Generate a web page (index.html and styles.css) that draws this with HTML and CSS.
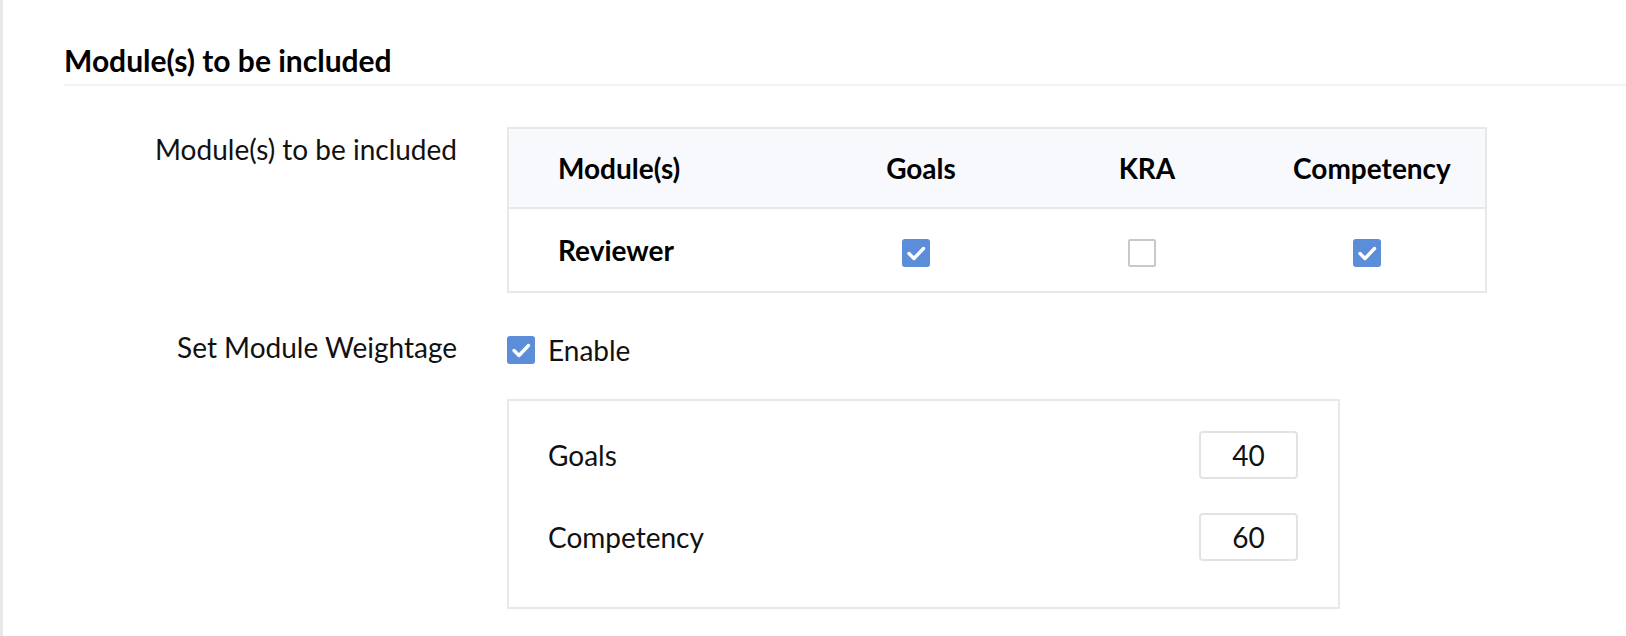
FILE: index.html
```html
<!DOCTYPE html>
<html lang="en">

<head>
    <meta charset="UTF-8">
    <meta name="viewport" content="width=device-width, initial-scale=1.0">
    <title>Appraisal Modules</title>
    <link rel="stylesheet" href="styles.css">
</head>

<body>
    <main class="page">
        <h2 class="section-title">Module(s) to be included</h2>

        <div class="field-row modules-row">
            <div class="field-label">Module(s) to be included</div>
            <div class="field-body">
                <table class="module-table">
                    <thead>
                        <tr>
                            <th class="col-name">Module(s)</th>
                            <th class="col-goals">Goals</th>
                            <th class="col-kra">KRA</th>
                            <th class="col-comp">Competency</th>
                        </tr>
                    </thead>
                    <tbody>
                        <tr>
                            <td class="col-name">Reviewer</td>
                            <td>
                                <span class="check is-on">
                                    <svg viewBox="0 0 28 28"><path d="M7 14.5 L12 19.5 L21.5 9.5" /></svg>
                                </span>
                            </td>
                            <td>
                                <span class="check"></span>
                            </td>
                            <td>
                                <span class="check is-on">
                                    <svg viewBox="0 0 28 28"><path d="M7 14.5 L12 19.5 L21.5 9.5" /></svg>
                                </span>
                            </td>
                        </tr>
                    </tbody>
                </table>
            </div>
        </div>

        <div class="field-row weight-row">
            <div class="field-label">Set Module Weightage</div>
            <div class="field-body">
                <label class="enable">
                    <span class="check is-on">
                        <svg viewBox="0 0 28 28"><path d="M7 14.5 L12 19.5 L21.5 9.5" /></svg>
                    </span>
                    Enable
                </label>

                <div class="weight-box">
                    <div class="weight-item">
                        <span class="weight-name">Goals</span>
                        <input class="weight-input" type="text" value="40">
                    </div>
                    <div class="weight-item">
                        <span class="weight-name">Competency</span>
                        <input class="weight-input" type="text" value="60">
                    </div>
                </div>
            </div>
        </div>
    </main>
</body>

</html>
```

FILE: styles.css
```css
* {
    box-sizing: border-box;
    margin: 0;
    padding: 0;
}

body {
    font-family: Lato, "Open Sans", sans-serif;
    color: #111;
    background: #fff;
}

.page {
    min-height: 636px;
    border-left: 3px solid #e8e8e8;
}

.section-title {
    margin-left: 61px;
    padding-top: 42px;
    padding-bottom: 6px;
    font-size: 30px;
    line-height: 36px;
    font-weight: 700;
    color: #000;
    border-bottom: 2px solid #f3f3f3;
}

.field-row {
    display: grid;
    grid-template-columns: 454px 1fr;
    column-gap: 50px;
}

.field-label {
    text-align: right;
    font-size: 28px;
    line-height: 34px;
}

.modules-row {
    margin-top: 41px;
}

.modules-row .field-label {
    padding-top: 5px;
}

.module-table {
    width: 980px;
    border: 2px solid #e8e8e8;
    border-spacing: 0;
    table-layout: fixed;
    font-size: 28px;
}

.module-table th {
    height: 80px;
    background: #f8f9fd;
    border-bottom: 2px solid #e8e8e8;
    font-weight: 700;
    color: #000;
    text-align: center;
}

.module-table td {
    height: 82px;
    text-align: center;
    vertical-align: middle;
}

.module-table .col-name {
    text-align: left;
    padding-left: 49px;
    font-weight: 700;
    color: #000;
}

th.col-name {
    width: 298px;
}

th.col-goals {
    width: 228px;
}

th.col-kra {
    width: 224px;
}

.check {
    display: inline-block;
    width: 28px;
    height: 28px;
    border: 2px solid #c8c8c8;
    border-radius: 2px;
    background: #fff;
    vertical-align: middle;
    margin-right: 11px;
}

.check.is-on {
    border: none;
    border-radius: 3px;
    background: #5b8dd9;
}

.check svg {
    display: block;
    width: 28px;
    height: 28px;
}

.check path {
    fill: none;
    stroke: #fff;
    stroke-width: 3.4;
    stroke-linecap: round;
    stroke-linejoin: round;
}

.weight-row {
    margin-top: 37px;
}

.weight-row .field-body {
    padding-top: 3px;
}

.enable {
    display: flex;
    align-items: center;
    gap: 13px;
    font-size: 28px;
    line-height: 34px;
}

.enable .check {
    margin-right: 0;
}

.weight-box {
    width: 833px;
    margin-top: 32px;
    padding: 30px 40px 46px 39px;
    border: 2px solid #e8e8e8;
    display: flex;
    flex-direction: column;
    gap: 34px;
}

.weight-item {
    display: flex;
    align-items: center;
    justify-content: space-between;
    height: 48px;
    font-size: 28px;
}

.weight-input {
    width: 99px;
    height: 48px;
    border: 2px solid #e3e3e3;
    border-radius: 4px;
    font-family: Lato, "Open Sans", sans-serif;
    font-size: 28px;
    color: #111;
    text-align: center;
    outline: none;
}
```
